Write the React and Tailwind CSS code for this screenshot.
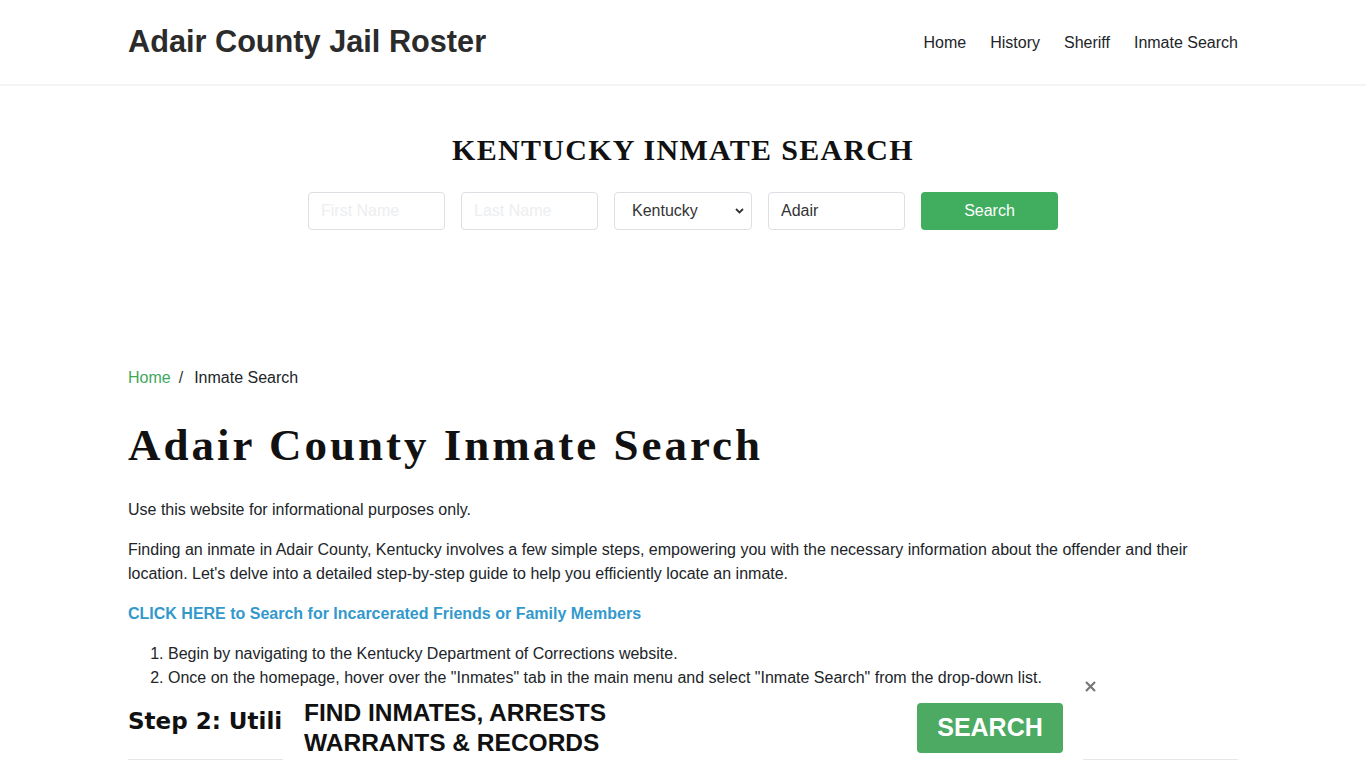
import React from "react";

const sans = { fontFamily: '"Liberation Sans", Arial, sans-serif' };
const serif = { fontFamily: '"Liberation Serif", "Times New Roman", serif' };

export default function App() {
  return (
    <div className="min-h-screen bg-white text-[#212529]" style={sans}>
      <header className="border-b-2 border-[#f4f4f4] h-[86px]">
        <div className="w-[1110px] mx-auto h-[84px] flex items-center justify-between">
          <a className="text-[30.7px] font-bold text-[#2b2b2b] leading-none pt-[1px]" href="#">
            Adair County Jail Roster
          </a>
          <nav className="flex items-center gap-6 text-[16px] text-[#212529] pt-[2px]">
            <a href="#">Home</a>
            <a href="#">History</a>
            <a href="#">Sheriff</a>
            <a href="#">Inmate Search</a>
          </nav>
        </div>
      </header>

      <section className="pt-[46px] flex flex-col items-center">
        <h2
          className="text-[30px] font-bold leading-[36px] tracking-[1.3px] text-[#111]"
          style={serif}
        >
          KENTUCKY INMATE SEARCH
        </h2>
        <form className="mt-[24px] flex gap-4" onSubmit={(e) => e.preventDefault()}>
          <input
            className="w-[137px] h-[38px] border border-[#dcdfe3] rounded-[4px] px-3 text-[16px] placeholder:text-[#eceef0] outline-none"
            placeholder="First Name"
          />
          <input
            className="w-[137px] h-[38px] border border-[#dcdfe3] rounded-[4px] px-3 text-[16px] placeholder:text-[#eceef0] outline-none"
            placeholder="Last Name"
          />
          <div className="relative w-[138px] h-[38px]">
            <select
              className="appearance-none w-full h-full border border-[#dcdfe3] rounded-[4px] pl-[17px] text-[16px] text-[#333] bg-white outline-none"
              defaultValue="Kentucky"
            >
              <option>Kentucky</option>
            </select>
            <svg
              className="absolute right-[8px] top-[16px] pointer-events-none"
              width="9"
              height="6"
              viewBox="0 0 9 6"
            >
              <path d="M1 1l3.5 3.5L8 1" fill="none" stroke="#333" strokeWidth="1.8" />
            </svg>
          </div>
          <input
            className="w-[137px] h-[38px] border border-[#dcdfe3] rounded-[4px] px-3 text-[16px] text-[#333] outline-none"
            defaultValue="Adair"
          />
          <button className="w-[137px] h-[38px] rounded-[4px] bg-[#41ad5f] text-white text-[16px]">
            Search
          </button>
        </form>
      </section>

      <main className="w-[1110px] mx-auto mt-[136px] pb-[200px]">
        <div className="flex items-center text-[16px] leading-[24px]">
          <a href="#" className="text-[#3fa75c]">Home</a>
          <span className="pl-2 pr-[11px] text-[#333]">/</span>
          <span>Inmate Search</span>
        </div>
        <h1
          className="mt-[28px] text-[45px] font-bold leading-[54px] tracking-[3px] text-[#111]"
          style={serif}
        >
          Adair County Inmate Search
        </h1>
        <p className="mt-[26px] text-[16px] leading-[24px]">
          Use this website for informational purposes only.
        </p>
        <p className="mt-[16px] text-[16px] leading-[24px]">
          Finding an inmate in Adair County, Kentucky involves a few simple steps, empowering you with the
          necessary information about the offender and their location. Let's delve into a detailed
          step-by-step guide to help you efficiently locate an inmate.
        </p>
        <p className="mt-[16px] text-[16px] leading-[24px]">
          <a href="#" className="font-bold text-[#3399cc]">
            CLICK HERE to Search for Incarcerated Friends or Family Members
          </a>
        </p>
        <ol className="mt-[16px] list-decimal pl-10 text-[16px] leading-[24px]">
          <li>Begin by navigating to the Kentucky Department of Corrections website.</li>
          <li>
            Once on the homepage, hover over the "Inmates" tab in the main menu and select "Inmate Search"
            from the drop-down list.
          </li>
        </ol>
        <h3
          className="mt-[17px] text-[23px] font-bold leading-[28px] text-[#111]"
          style={{ fontFamily: '"DejaVu Sans", Verdana, sans-serif' }}
        >
          Step 2: Utilize the Search Function
        </h3>
        <hr className="mt-[24px] border-t border-[#e6e6e6]" />
        <p className="mt-[16px] text-[16px] leading-[24px]">
          Enter the inmate's first and last name into the search fields provided and submit the form to view
          the results.
        </p>
      </main>

      <div className="fixed bottom-0 left-[283px] w-[800px] h-[73px] bg-white">
        <div className="h-full flex items-start justify-between pl-[21px] pr-[20px]">
          <div className="mt-[3px] text-[24.5px] font-bold leading-[30px] text-[#111]">
            <div>FIND INMATES, ARRESTS</div>
            <div>WARRANTS &amp; RECORDS</div>
          </div>
          <button className="mt-[8px] w-[146px] h-[50px] rounded-[4px] bg-[#4caa62] text-white text-[25px] font-bold">
            SEARCH
          </button>
        </div>
        <button className="absolute right-[-14px] top-[-16px] w-[14px] h-[14px] flex items-center justify-center">
          <svg width="11" height="11" viewBox="0 0 11 11">
            <path d="M1 1l9 9M10 1l-9 9" stroke="#777" strokeWidth="2.2" />
          </svg>
        </button>
      </div>
    </div>
  );
}
